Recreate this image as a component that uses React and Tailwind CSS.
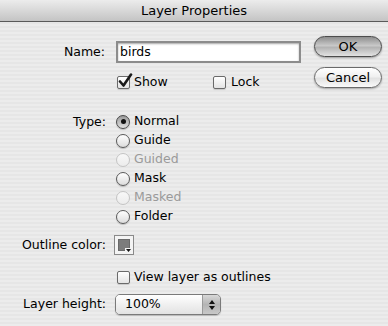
import React from "react";

const FONT = { fontFamily: '"DejaVu Sans", "Liberation Sans", sans-serif' };

function Checkbox({ checked }) {
  return (
    <span className="relative inline-block h-[13px] w-[13px] shrink-0 rounded-[2px] border border-[#6a6a6a] bg-[linear-gradient(#ffffff,#e4e4e4)] shadow-[0_1px_1px_rgba(0,0,0,0.15)]">
      {checked && (
        <svg
          className="absolute -left-[1px] -top-[4px]"
          width="16"
          height="16"
          viewBox="0 0 16 16"
          aria-hidden
        >
          <path d="M3 8.5 L6.5 12.5 L14 1.5" fill="none" stroke="#1a1a1a" strokeWidth="2.6" strokeLinecap="round" strokeLinejoin="round" />
        </svg>
      )}
    </span>
  );
}

function Radio({ selected, disabled }) {
  return (
    <span
      className={
        "relative inline-flex h-[14px] w-[14px] shrink-0 items-center justify-center rounded-full border " +
        (disabled
          ? "border-[#c4c4c4] bg-[linear-gradient(#f8f8f8,#ececec)]"
          : selected
          ? "border-[#4a4a4a] bg-[linear-gradient(#9a9a9a,#e0e0e0)] shadow-[0_1px_1px_rgba(0,0,0,0.2)]"
          : "border-[#5a5a5a] bg-[linear-gradient(#ffffff,#dcdcdc)] shadow-[0_1px_1px_rgba(0,0,0,0.2)]")
      }
    >
      {selected && <span className="h-[5px] w-[5px] rounded-full bg-[#111]" />}
    </span>
  );
}

const TYPES = [
  { label: "Normal", selected: true },
  { label: "Guide" },
  { label: "Guided", disabled: true },
  { label: "Mask" },
  { label: "Masked", disabled: true },
  { label: "Folder" },
];

export default function App() {
  return (
    <div
      className="h-[326px] w-[388px] overflow-hidden bg-[repeating-linear-gradient(#ececec_0px,#ececec_2px,#e6e6e6_2px,#e6e6e6_4px)] text-[12.5px] text-black"
      style={FONT}
    >
      <div className="flex h-[22px] items-center justify-center border-b border-[#5a5a5a] bg-[linear-gradient(#ececec,#d4d4d4_60%,#c4c4c4)] text-[13px] leading-none">
        Layer Properties
      </div>

      <div className="flex">
        <div className="flex w-[308px] flex-col pt-[19px]">
          <div className="flex h-[22px] items-center">
            <span className="w-[106px] pr-[1px] text-right">Name:</span>
            <div className="ml-[10px] flex h-[22px] w-[185px] items-center border-2 border-[#8c8c8c] bg-white pl-[2px] shadow-[inset_0_1px_2px_rgba(0,0,0,0.35)]">
              birds
            </div>
          </div>

          <div className="mt-[9px] flex h-[20px] items-center">
            <div className="ml-[117px] flex w-[96px] items-center gap-[4px]">
              <Checkbox checked />
              <span>Show</span>
            </div>
            <div className="flex items-center gap-[5px]">
              <Checkbox />
              <span>Lock</span>
            </div>
          </div>

          <div className="mt-[20px] flex">
            <span className="h-[19px] w-[106px] text-right leading-[19px]">Type:</span>
            <div className="ml-[10px] flex flex-col">
              {TYPES.map((t) => (
                <div key={t.label} className="flex h-[19px] items-center gap-[4px]">
                  <Radio selected={t.selected} disabled={t.disabled} />
                  <span className={t.disabled ? "text-[#9a9a9a]" : ""}>{t.label}</span>
                </div>
              ))}
            </div>
          </div>

          <div className="mt-[9px] flex h-[20px] items-center">
            <span className="w-[106px] text-right">Outline color:</span>
            <div className="relative ml-[8px] h-[20px] w-[20px] border border-[#8a8a8a] bg-[#f4f4f4] p-[3px]">
              <div className="h-full w-full border border-[#6a6a6a] bg-[#7c7c7c]" />
              <svg className="absolute bottom-[1px] right-[1px]" width="7" height="5" viewBox="0 0 7 5" aria-hidden>
                <rect x="0" y="0" width="7" height="5" fill="#f4f4f4" />
                <path d="M1 1 L6 1 L3.5 4 Z" fill="#111" />
              </svg>
            </div>
          </div>

          <div className="mt-[12px] flex h-[20px] items-center">
            <div className="ml-[117px] flex items-center gap-[4px]">
              <Checkbox />
              <span>View layer as outlines</span>
            </div>
          </div>

          <div className="mt-[7px] flex h-[21px] items-center">
            <span className="w-[106px] text-right">Layer height:</span>
            <div className="ml-[9px] flex h-[21px] w-[106px] overflow-hidden rounded-[5px] border border-[#7a7a7a] shadow-[0_1px_1px_rgba(0,0,0,0.2)]">
              <div className="flex flex-1 items-center bg-[linear-gradient(#ffffff,#f0f0f0_50%,#e2e2e2)] pl-[9px]">100%</div>
              <div className="flex w-[18px] flex-col items-center justify-center gap-[2px] border-l border-[#9a9a9a] bg-[linear-gradient(#d8d8d8,#b4b4b4_50%,#c8c8c8)]">
                <svg width="6" height="4" viewBox="0 0 6 4" aria-hidden>
                  <path d="M0 4 L3 0 L6 4 Z" fill="#111" />
                </svg>
                <svg width="6" height="4" viewBox="0 0 6 4" aria-hidden>
                  <path d="M0 0 L6 0 L3 4 Z" fill="#111" />
                </svg>
              </div>
            </div>
          </div>
        </div>

        <div className="ml-[6px] flex flex-col pt-[14px]">
          <button
            type="button"
            className="flex h-[21px] w-[68px] items-center justify-center rounded-full border border-[#4c4c4c] bg-[linear-gradient(#8e8e8e,#c8c8c8_45%,#b4b4b4_55%,#e2e2e2)] text-[13px] leading-none shadow-[0_1px_2px_rgba(0,0,0,0.35)]"
          >
            OK
          </button>
          <button
            type="button"
            className="mt-[10px] flex h-[21px] w-[68px] items-center justify-center rounded-full border border-[#6a6a6a] bg-[linear-gradient(#ffffff,#f0f0f0_45%,#e2e2e2_55%,#fafafa)] text-[13px] leading-none shadow-[0_1px_2px_rgba(0,0,0,0.3)]"
          >
            Cancel
          </button>
        </div>
      </div>
    </div>
  );
}
